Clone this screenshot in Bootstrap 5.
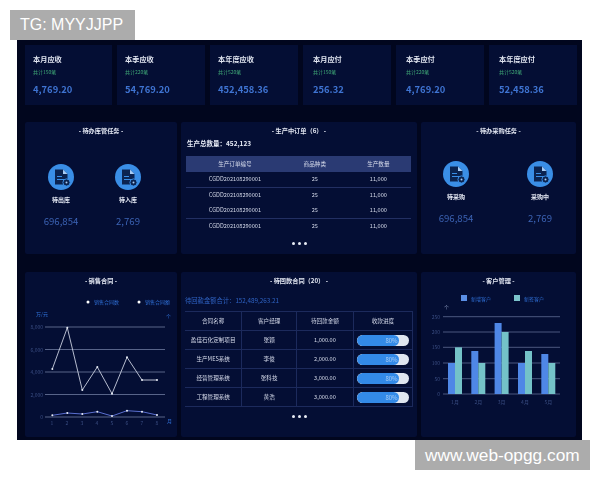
<!DOCTYPE html>
<html>

<head>
  <meta charset="utf-8">
  <meta name="viewport" content="width=device-width">
  <title>Dashboard</title>
  <link href="https://cdn.jsdelivr.net/npm/bootstrap@5.3.2/dist/css/bootstrap.min.css" rel="stylesheet" type="text/css" />
  <script src="https://cdn.jsdelivr.net/npm/bootstrap@5.3.2/dist/js/bootstrap.bundle.min.js"></script>
  <style>
    body {
      background: #fff;
      font-family: "Noto Sans CJK SC", "Noto Sans", sans-serif;
      padding: 40px 0 0 17px;
      width: 600px;
      height: 480px;
      overflow: hidden;
    }

    .dash {
      width: 565px;
      height: 400px;
      background: #01061e;
      padding: 5px 6px 3px 8px;
      color: #e6eaf5;
      filter: blur(.45px);
    }

    .stat-row {
      display: grid;
      grid-template-columns: 87px repeat(5, 88px);
      gap: 5px;
      height: 60px;
      margin-bottom: 17px;
    }

    .stat-box {
      background: #040e34;
      padding: 9px 8px 0;
    }

    .stat-box:nth-child(n+4) {
      padding-left: 10px;
    }

    .stat-title {
      font-size: 7.2px;
      font-weight: 700;
      line-height: 11px;
      color: #e3e7f2;
    }

    .stat-sub {
      font-size: 5px;
      line-height: 8px;
      margin-top: 3px;
      color: #3fa877;
    }

    .stat-num {
      font-size: 9.4px;
      font-weight: 700;
      line-height: 13px;
      margin-top: 7px;
      color: #3f74d2;
    }

    .panel-row {
      display: grid;
      grid-template-columns: 152px 236px 155px;
      gap: 4px;
    }

    .row-mid {
      height: 132px;
      margin-bottom: 18px;
    }

    .row-low {
      height: 165px;
    }

    .box {
      background: #040e34;
      border-radius: 2px;
      padding-top: 4px;
    }

    .box-title {
      font-size: 6.2px;
      font-weight: 700;
      line-height: 10px;
      text-align: center;
      color: #e3e7f2;
    }

    .tasks {
      display: flex;
      gap: 7px;
      padding: 28px 0 0 6px;
    }

    .tasks-r {
      gap: 24px;
      padding: 25px 0 0 5px;
    }

    .task-item {
      width: 60px;
      text-align: center;
    }

    .task-icon {
      display: block;
      width: 26px;
      height: 26px;
      margin: 0 auto 5px;
    }

    .task-name {
      font-size: 6px;
      font-weight: 700;
      line-height: 10px;
    }

    .task-num {
      font-size: 9.6px;
      line-height: 14px;
      margin-top: 9px;
      color: #3c63b4;
    }

    .total-line {
      font-size: 6.5px;
      font-weight: 700;
      line-height: 10px;
      margin: 2px 0 8px 6px;
    }

    .sum-line {
      font-size: 6.3px;
      line-height: 10px;
      margin: 10px 0 5px 4px;
      color: #2f63c4;
    }

    .order-table,
    .pay-table {
      --bs-table-bg: transparent;
      --bs-table-color: #d5daea;
      font-size: 5.6px;
      text-align: center;
      table-layout: fixed;
    }

    .order-table {
      width: 225px;
      margin: 0 0 0 5px;
    }

    .order-table th,
    .order-table td {
      height: 15.5px;
      padding: 0;
      vertical-align: middle;
      border: 0;
      font-weight: 400;
    }

    .order-table th {
      background: #2a3a73;
    }

    .order-table tr.ln td {
      border-bottom: 1px solid #222f62;
    }

    .pay-table {
      width: 228px;
      margin: 0 0 8px 4px;
    }

    .pay-table th,
    .pay-table td {
      height: 19px;
      padding: 0;
      vertical-align: middle;
      border: 1px solid #1c2a5c;
      border-left-width: 0;
      border-right-width: 0;
      font-weight: 400;
    }

    .pay-table th + th,
    .pay-table td + td {
      border-left: 1px solid #1c2a5c;
    }

    .pay-table th:last-child,
    .pay-table td:last-child {
      border-right: 1px solid #1c2a5c;
    }

    .pay-bar {
      --bs-progress-height: 11px;
      --bs-progress-bg: #dfe6f0;
      --bs-progress-border-radius: 6px;
      --bs-progress-bar-bg: #338ae8;
      margin: 0 3px;
      font-size: 6px;
    }

    .pay-bar .progress-bar {
      align-items: flex-end;
      padding-right: 1px;
      border-radius: 6px;
      color: #a9cdf5;
    }

    .more-dots {
      display: flex;
      justify-content: center;
      gap: 3px;
    }

    .more-dots i {
      width: 3px;
      height: 3px;
      border-radius: 50%;
      background: #e8ecf5;
    }

    .chart-svg {
      display: block;
    }

    .chart-svg text {
      font-family: "Noto Sans CJK SC", "Noto Sans", sans-serif;
      font-size: 5px;
      fill: #3a4d82;
    }

    .chart-svg .blue-txt {
      fill: #2f6fd6;
    }

    .chart-svg .unit-txt {
      fill: #8a97bd;
    }

    .mark-tag {
      position: absolute;
      background: #acacac;
      color: #fff;
      font-family: "Liberation Sans", sans-serif;
      font-size: 16px;
      line-height: 30px;
      height: 30px;
    }

    .mark-tl {
      left: 10px;
      top: 10px;
      width: 125px;
      padding-left: 10px;
    }

    .mark-br {
      left: 415px;
      top: 440px;
      width: 175px;
      padding-left: 10px;
      font-size: 17.3px;
    }
  </style>
</head>

<body>
  <svg width="0" height="0" class="position-absolute">
    <symbol id="doc-icon" viewBox="0 0 26 26">
      <circle cx="13" cy="13" r="13" fill="#3a8ee6" />
      <path d="M7 5.500h8l4.500 4.500v10.500h-12.500z" fill="#0b2350" />
      <path d="M15 5.500v4.500h4.500z" fill="#a9cdf5" />
      <path d="M9 12.500h5M9 15.500h7" stroke="#3a8ee6" stroke-width="1" />
      <circle cx="18.500" cy="18.500" r="3.600" fill="#0b2350" stroke="#3a8ee6" />
      <circle cx="18.500" cy="18.500" r="1" fill="#a9cdf5" />
    </symbol>
  </svg>

  <div class="dash">
    <div class="stat-row">
      <div class="stat-box">
        <div class="stat-title">本月应收</div>
        <div class="stat-sub">共计150笔</div>
        <div class="stat-num">4,769.20</div>
      </div>
      <div class="stat-box">
        <div class="stat-title">本季应收</div>
        <div class="stat-sub">共计220笔</div>
        <div class="stat-num">54,769.20</div>
      </div>
      <div class="stat-box">
        <div class="stat-title">本年度应收</div>
        <div class="stat-sub">共计520笔</div>
        <div class="stat-num">452,458.36</div>
      </div>
      <div class="stat-box">
        <div class="stat-title">本月应付</div>
        <div class="stat-sub">共计150笔</div>
        <div class="stat-num">256.32</div>
      </div>
      <div class="stat-box">
        <div class="stat-title">本季应付</div>
        <div class="stat-sub">共计220笔</div>
        <div class="stat-num">4,769.20</div>
      </div>
      <div class="stat-box">
        <div class="stat-title">本年度应付</div>
        <div class="stat-sub">共计520笔</div>
        <div class="stat-num">52,458.36</div>
      </div>
    </div>

    <div class="panel-row row-mid">
      <div class="box">
        <div class="box-title">- 待办库管任务 -</div>
        <div class="tasks">
          <div class="task-item">
            <svg class="task-icon"><use href="#doc-icon" /></svg>
            <div class="task-name">待出库</div>
            <div class="task-num">696,854</div>
          </div>
          <div class="task-item">
            <svg class="task-icon"><use href="#doc-icon" /></svg>
            <div class="task-name">待入库</div>
            <div class="task-num">2,769</div>
          </div>
        </div>
      </div>

      <div class="box">
        <div class="box-title">- 生产中订单（6） -</div>
        <div class="total-line">生产总数量：452,123</div>
        <table class="table order-table">
          <thead>
            <tr>
              <th style="width:43.5%">生产订单编号</th>
              <th style="width:27.5%">商品种类</th>
              <th>生产数量</th>
            </tr>
          </thead>
          <tbody>
            <tr class="ln"><td>CGDD202108290001</td><td>25</td><td>11,000</td></tr>
            <tr><td>CGDD202108290001</td><td>25</td><td>11,000</td></tr>
            <tr class="ln"><td>CGDD202108290001</td><td>25</td><td>11,000</td></tr>
            <tr><td>CGDD202108290001</td><td>25</td><td>11,000</td></tr>
          </tbody>
        </table>
        <div class="more-dots mt-2"><i></i><i></i><i></i></div>
      </div>

      <div class="box">
        <div class="box-title">- 待办采购任务 -</div>
        <div class="tasks tasks-r">
          <div class="task-item">
            <svg class="task-icon"><use href="#doc-icon" /></svg>
            <div class="task-name">待采购</div>
            <div class="task-num">696,854</div>
          </div>
          <div class="task-item">
            <svg class="task-icon"><use href="#doc-icon" /></svg>
            <div class="task-name">采购中</div>
            <div class="task-num">2,769</div>
          </div>
        </div>
      </div>
    </div>

    <div class="panel-row row-low">
      <div class="box">
        <div class="box-title">- 销售合同 -</div>
        <svg class="chart-svg" width="152" height="150" viewBox="25 286 152 150">
          <circle cx="88" cy="302" r="1.500" fill="#fff" />
          <text class="blue-txt" x="94" y="304">销售合同数</text>
          <circle cx="139" cy="302" r="1.500" fill="#fff" />
          <text class="blue-txt" x="145" y="304">销售合同额</text>
          <text class="blue-txt" x="36" y="316">万/元</text>
          <text class="blue-txt" x="166" y="318">个</text>
          <path d="M45 327h120M45 349.500h120M45 372h120M45 394.500h120M45 417h120" stroke="#6f7ba0" stroke-width=".8" />
          <g text-anchor="end">
            <text x="43" y="329">8,000</text>
            <text x="43" y="351.500">6,000</text>
            <text x="43" y="374">4,000</text>
            <text x="43" y="396.500">2,000</text>
            <text x="43" y="419">0</text>
          </g>
          <g text-anchor="middle">
            <text x="52" y="425">1</text>
            <text x="67" y="425">2</text>
            <text x="82" y="425">3</text>
            <text x="97" y="425">4</text>
            <text x="112" y="425">5</text>
            <text x="127" y="425">6</text>
            <text x="142" y="425">7</text>
            <text x="157" y="425">8</text>
          </g>
          <text class="blue-txt" x="167" y="423">月</text>
          <polyline fill="none" stroke="#c9cfe0" stroke-width=".9" points="52.300,369 67.300,327.700 82.300,390 97.300,367 112,393.700 127,357.300 142,380 157,380" />
          <polyline fill="none" stroke="#5a6fd0" stroke-width="1" points="52.300,415.300 67.300,413 82.300,414 97.300,411.700 112,416 127,410.700 142,411.700 157,415" />
          <g fill="#e8ecf5">
            <circle cx="52.300" cy="369" r="1" /><circle cx="67.300" cy="327.700" r="1" /><circle cx="82.300" cy="390" r="1" /><circle cx="97.300" cy="367" r="1" />
            <circle cx="112" cy="393.700" r="1" /><circle cx="127" cy="357.300" r="1" /><circle cx="142" cy="380" r="1" /><circle cx="157" cy="380" r="1" />
            <circle cx="52.300" cy="415.300" r="1" /><circle cx="67.300" cy="413" r="1" /><circle cx="82.300" cy="414" r="1" /><circle cx="97.300" cy="411.700" r="1" />
            <circle cx="112" cy="416" r="1" /><circle cx="127" cy="410.700" r="1" /><circle cx="142" cy="411.700" r="1" /><circle cx="157" cy="415" r="1" />
          </g>
        </svg>
      </div>

      <div class="box">
        <div class="box-title">- 待回款合同（20） -</div>
        <div class="sum-line">待回款金额合计：152,489,263.21</div>
        <table class="table pay-table">
          <thead>
            <tr>
              <th style="width:25%">合同名称</th>
              <th style="width:24%">客户经理</th>
              <th style="width:25%">待回款金额</th>
              <th>收款进度</th>
            </tr>
          </thead>
          <tbody>
            <tr>
              <td>盈佳石化定制项目</td><td>张颖</td><td>1,000.00</td>
              <td><div class="progress pay-bar"><div class="progress-bar" style="width:80%">80%</div></div></td>
            </tr>
            <tr>
              <td>生产MES系统</td><td>李俊</td><td>2,000.00</td>
              <td><div class="progress pay-bar"><div class="progress-bar" style="width:80%">80%</div></div></td>
            </tr>
            <tr>
              <td>经营管理系统</td><td>张科技</td><td>3,000.00</td>
              <td><div class="progress pay-bar"><div class="progress-bar" style="width:80%">80%</div></div></td>
            </tr>
            <tr>
              <td>工程管理系统</td><td>黄浩</td><td>3,000.00</td>
              <td><div class="progress pay-bar"><div class="progress-bar" style="width:80%">80%</div></div></td>
            </tr>
          </tbody>
        </table>
        <div class="more-dots"><i></i><i></i><i></i></div>
      </div>

      <div class="box">
        <div class="box-title">- 客户管理 -</div>
        <svg class="chart-svg" width="155" height="150" viewBox="421 286 155 150">
          <rect x="461" y="295" width="6" height="6" fill="#5b8fe6" />
          <text class="blue-txt" x="471" y="301">新增客户</text>
          <rect x="514" y="295" width="6" height="6" fill="#7cc4cc" />
          <text class="blue-txt" x="524" y="301">新签客户</text>
          <text class="unit-txt" x="444" y="309">个</text>
          <path d="M443 316.700h117M443 332h117M443 347.300h117M443 363h117M443 378.700h117M443 394h117" stroke="#5e6a92" stroke-width=".8" />
          <g text-anchor="end">
            <text x="440" y="318.700">250</text>
            <text x="440" y="334">200</text>
            <text x="440" y="349.300">150</text>
            <text x="440" y="365">100</text>
            <text x="440" y="380.700">50</text>
            <text x="440" y="396">0</text>
          </g>
          <g fill="#4f87e6">
            <rect x="448" y="363" width="7" height="31" />
            <rect x="471.300" y="351" width="7" height="43" />
            <rect x="494.600" y="323" width="7" height="71" />
            <rect x="518" y="363" width="7" height="31" />
            <rect x="541.300" y="354" width="7" height="40" />
          </g>
          <g fill="#74c2c8">
            <rect x="455" y="347.300" width="7" height="46.700" />
            <rect x="478.300" y="363" width="7" height="31" />
            <rect x="501.600" y="332" width="7" height="62" />
            <rect x="525" y="351" width="7" height="43" />
            <rect x="548.300" y="363" width="7" height="31" />
          </g>
          <g text-anchor="middle">
            <text x="455" y="404">1月</text>
            <text x="478.300" y="404">2月</text>
            <text x="501.600" y="404">3月</text>
            <text x="525" y="404">4月</text>
            <text x="548.300" y="404">5月</text>
          </g>
        </svg>
      </div>
    </div>
  </div>

  <div class="mark-tag mark-tl">TG: MYYJJPP</div>
  <div class="mark-tag mark-br">www.web-opgg.com</div>
</body>

</html>
